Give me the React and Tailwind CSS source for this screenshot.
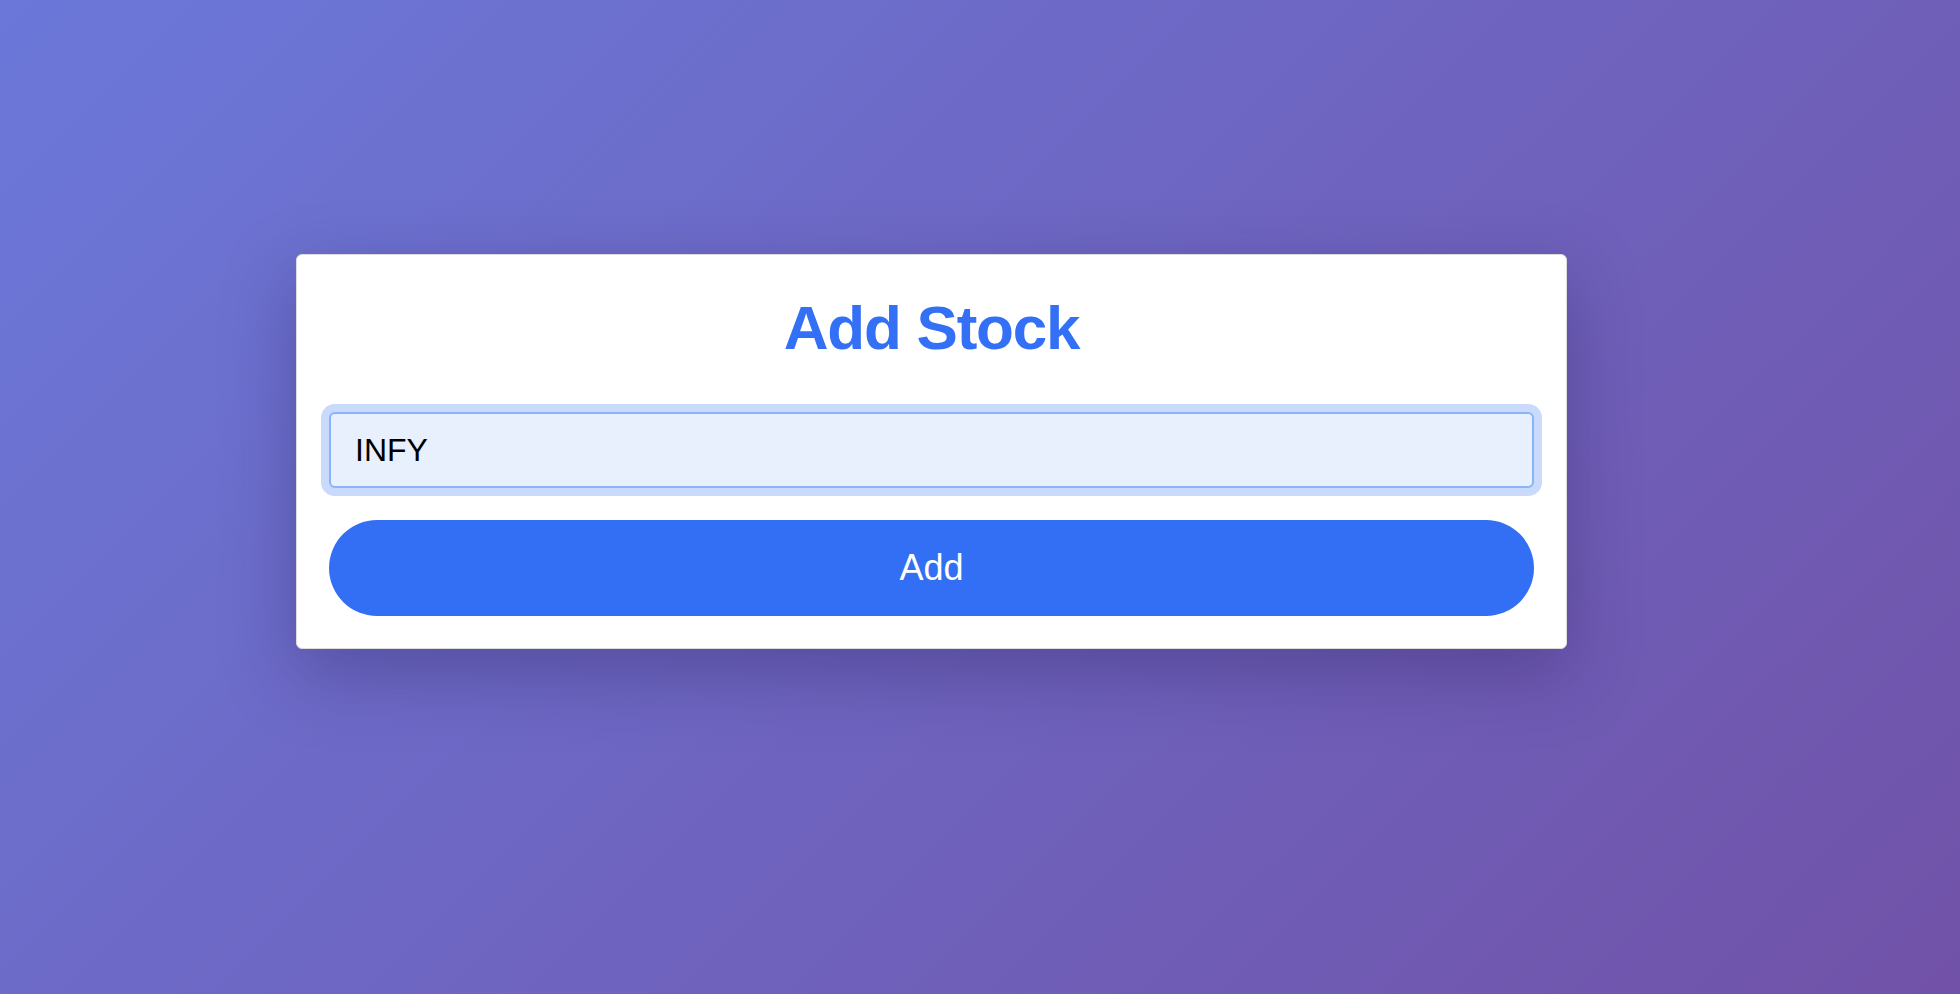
export default function App() {
  return (
    <div className="min-h-screen bg-[linear-gradient(135deg,#6b78d9_0%,#7152a8_100%)] pt-[254px] pl-[296px] font-['Liberation_Sans',Arial,sans-serif]">
      <div className="w-[1271px] bg-white border border-[#dcdcdc] rounded-md p-8 shadow-[0_24px_70px_rgba(40,30,90,0.35)]">
        <h2 className="pt-[10px] text-[62px] leading-none font-bold tracking-[-0.02em] text-[#3370f5] text-center">
          Add Stock
        </h2>

        <div className="mt-[53px]">
          <input
            type="text"
            defaultValue="INFY"
            className="w-full h-[76px] px-6 bg-[#e8f0fe] border-2 border-[#8ab4f8] rounded-md ring-8 ring-[#c9dafc] text-[32px] text-black outline-none"
          />
        </div>

        <button className="mt-[32px] w-full h-[96px] rounded-full bg-[#336ff4] text-white text-[36px]">
          Add
        </button>
      </div>
    </div>
  );
}
